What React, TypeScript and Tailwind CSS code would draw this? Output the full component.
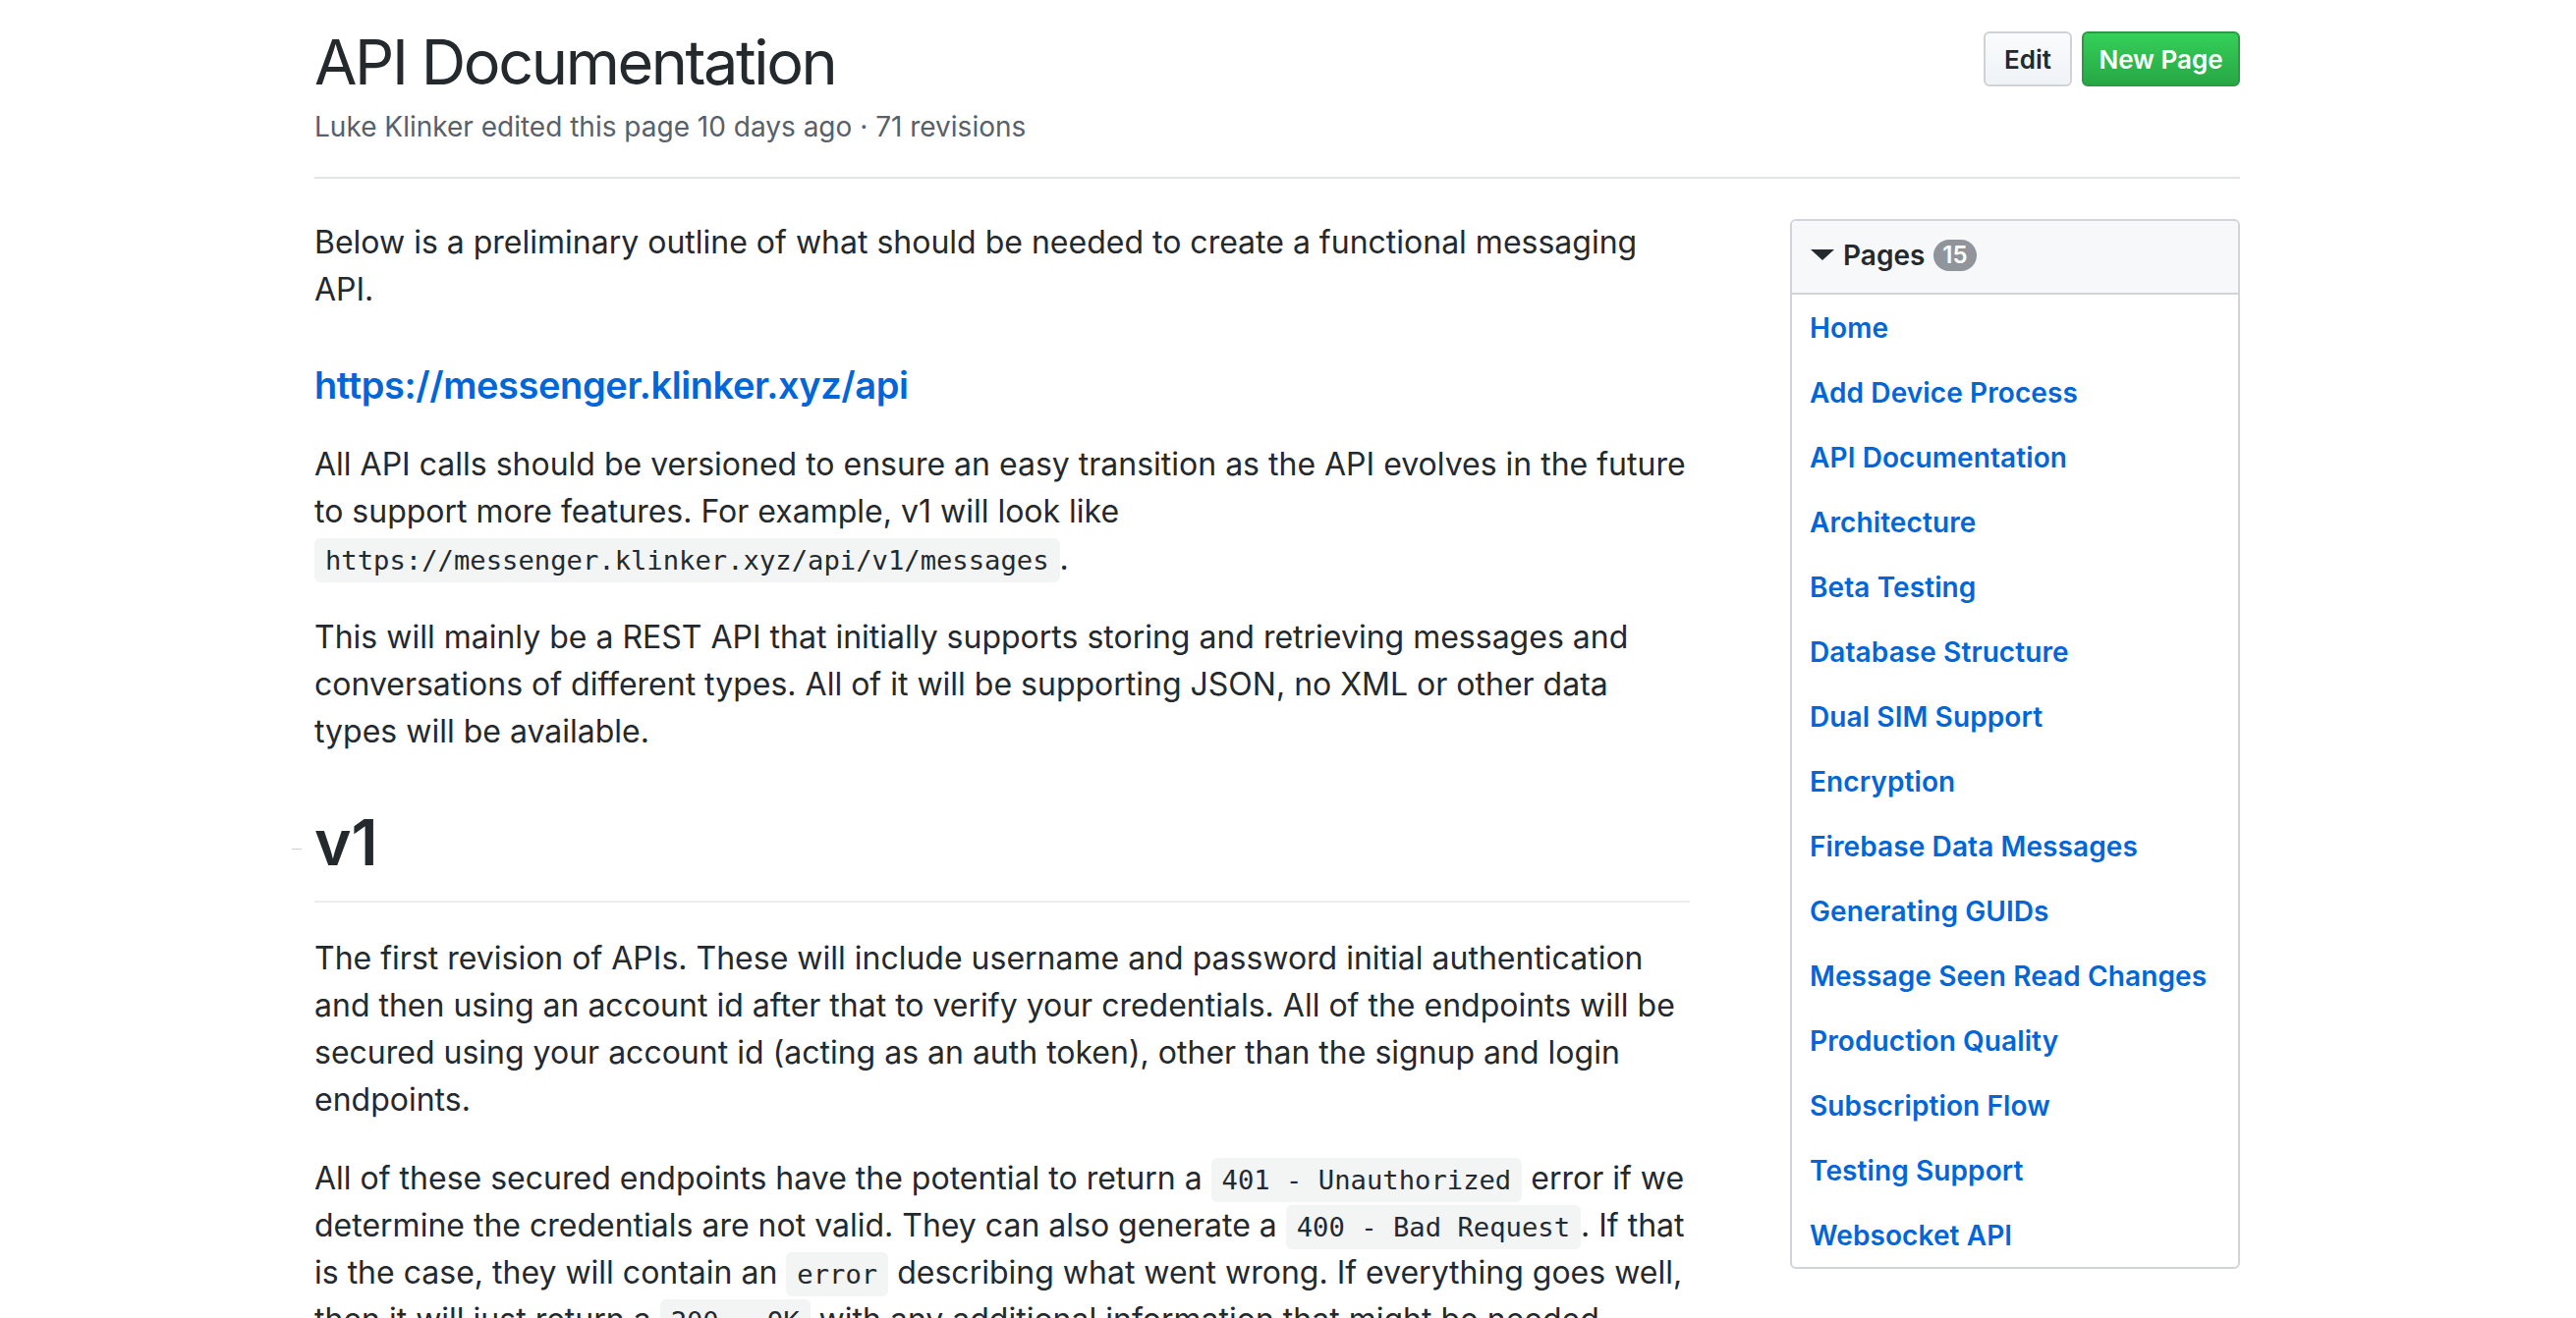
import React from "react";

const pages: string[] = [
  "Home",
  "Add Device Process",
  "API Documentation",
  "Architecture",
  "Beta Testing",
  "Database Structure",
  "Dual SIM Support",
  "Encryption",
  "Firebase Data Messages",
  "Generating GUIDs",
  "Message Seen Read Changes",
  "Production Quality",
  "Subscription Flow",
  "Testing Support",
  "Websocket API",
];

const Code: React.FC<{ children: React.ReactNode }> = ({ children }) => (
  <code className="font-['DejaVu_Sans_Mono',monospace] text-[27.2px] leading-none bg-[#f3f4f4] rounded-[6px] px-[11px] py-[7px]">
    {children}
  </code>
);

const App: React.FC = () => {
  return (
    <div className="h-[1342px] overflow-hidden bg-white font-['Inter',sans-serif] text-[#24292e]">
      <div className="w-[1960px] ml-[320px]">
        {/* page head */}
        <div className="flex justify-between items-start pt-[23px] pb-[31px] border-b-2 border-[#e1e4e8]">
          <div>
            <h1 className="text-[63px] leading-[80px] font-normal tracking-[-2.4px]">
              API Documentation
            </h1>
            <p className="mt-[6px] text-[28px] leading-[40px] text-[#586069]">
              Luke Klinker edited this page 10 days ago · 71 revisions
            </p>
          </div>
          <div className="flex gap-[10px] mt-[9px]">
            <button className="w-[90px] h-[56px] rounded-[6px] border-2 border-[#cfd3d7] bg-linear-to-b from-[#fafbfc] to-[#eff3f6] text-[26px] font-semibold text-[#24292e]">
              Edit
            </button>
            <button className="w-[161px] h-[56px] rounded-[6px] border-2 border-[#2a9a45] bg-linear-to-b from-[#34d058] to-[#28a745] text-[26px] font-semibold text-white">
              New Page
            </button>
          </div>
        </div>

        <div className="flex items-start mt-[41px]">
          {/* markdown body */}
          <div className="w-[1400px] text-[32px] leading-[48px]">
            <p>
              Below is a preliminary outline of what should be needed to create a functional messaging API.
            </p>
            <h3 className="mt-[48px] text-[38px] leading-[50px] font-semibold tracking-[-0.4px]">
              <a className="text-[#0366d6]">https://messenger.klinker.xyz/api</a>
            </h3>
            <p className="mt-[32px]">
              All API calls should be versioned to ensure an easy transition as the API evolves in the future to
              support more features. For example, v1 will look like{" "}
              <Code>https://messenger.klinker.xyz/api/v1/messages</Code>.
            </p>
            <p className="mt-[32px]">
              This will mainly be a REST API that initially supports storing and retrieving messages and
              conversations of different types. All of it will be supporting JSON, no XML or other data types will
              be available.
            </p>
            <h1 className="relative mt-[49px] pb-[19px] border-b-2 border-[#eaecef] text-[64px] leading-[80px] font-semibold">
              <span className="absolute left-[-23px] top-[46px] w-[10px] h-px bg-[#cfcfcf]" />
              v1
            </h1>
            <p className="mt-[33px]">
              The first revision of APIs. These will include username and password initial authentication and then
              using an account id after that to verify your credentials. All of the endpoints will be secured using
              your account id (acting as an auth token), other than the signup and login endpoints.
            </p>
            <p className="mt-[32px]">
              All of these secured endpoints have the potential to return a <Code>401 - Unauthorized</Code> error if
              we determine the credentials are not valid. They can also generate a <Code>400 - Bad Request</Code>. If
              that is the case, they will contain an <Code>error</Code> describing what went wrong. If everything goes
              well, then it will just return a <Code>200 - OK</Code> with any additional information that might be
              needed.
            </p>
          </div>

          {/* pages sidebar */}
          <div className="ml-auto w-[458px] border-2 border-[#d1d5da] rounded-[6px] overflow-hidden">
            <div className="flex items-center bg-[#f6f8fa] border-b-2 border-[#d1d5da] pl-[19px] pt-[15px] pb-[18px] text-[28px] leading-[40px] font-semibold">
              <svg width="24" height="12" viewBox="0 0 24 12" className="mr-[9px]">
                <polygon points="0,0 24,0 12,11" fill="#24292e" />
              </svg>
              <span>Pages</span>
              <span className="ml-[9px] h-[32px] px-[9px] rounded-full bg-[#8f959b] text-white text-[24px] leading-[32px] font-semibold">
                15
              </span>
            </div>
            <ul>
              {pages.map((name) => (
                <li key={name} className="pl-[18px] pt-[14px] pb-[12px] text-[28px] leading-[40px] font-semibold tracking-[0.1px]">
                  <a className="text-[#0366d6]">{name}</a>
                </li>
              ))}
            </ul>
          </div>
        </div>
      </div>
    </div>
  );
};

export default App;
